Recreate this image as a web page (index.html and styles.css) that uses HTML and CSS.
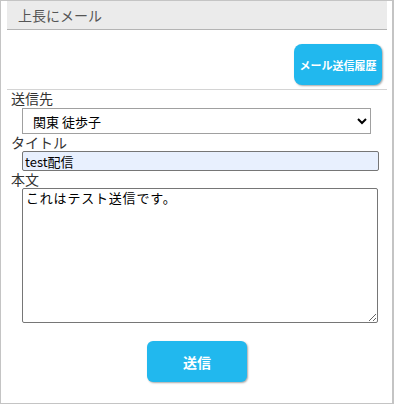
FILE: index.html
```html
<!DOCTYPE html>
<html>
<head>
	<meta charset="utf-8">
	<title>上長にメール</title>
	<link rel="stylesheet" href="styles.css">
</head>
<body>
	<div class="frame">
		<div class="pageHeader">上長にメール</div>
		<div class="topBar">
			<button type="button" class="btnHistory">メール送信履歴</button>
		</div>
		<form class="mailForm">
			<label class="fLabel">送信先</label>
			<select class="fSelect">
				<option>関東 徒歩子</option>
			</select>
			<label class="fLabel">タイトル</label>
			<input type="text" class="fInput" value="test配信">
			<label class="fLabel">本文</label>
			<textarea class="fText">これはテスト送信です。</textarea>
			<div class="fFooter">
				<button type="button" class="btnSend">送信</button>
			</div>
		</form>
	</div>
</body>
</html>
```

FILE: styles.css
```css
body{margin: 0;padding: 0}
.frame{
	box-sizing: border-box;
	width: 394px;
	height: 404px;
	border: 1px solid #c4c4c4;
	border-right-width: 2px;
	padding: 0 5px 0 6px;
	font-family: "Noto Sans CJK JP", sans-serif;
	color: #333;
	background-color: #fff;
}
.pageHeader{
	height: 28px;
	line-height: 28px;
	padding-left: 11px;
	background-color: #ebebeb;
	border-bottom: 1px solid #b4b4b4;
	font-size: 14px;
	color: #555;
}
.topBar{
	display: flex;
	justify-content: flex-end;
	padding: 14px 5px 4px 0;
	border-bottom: 1px solid #d4d4d4;
}
.btnHistory{
	width: 88px;
	height: 41px;
	padding: 0;
	border: 0;
	border-radius: 8px;
	background-color: #21b8ee;
	color: #fff;
	font-family: inherit;
	font-size: 11px;
	font-weight: bold;
	box-shadow: 1px 1px 2px rgba(0,0,0,0.35);
}
.mailForm{
	display: flex;
	flex-direction: column;
	align-items: flex-start;
}
.fLabel{
	display: block;
	padding-left: 4px;
	font-size: 14px;
	line-height: 17px;
	color: #333;
}
.fSelect{
	box-sizing: border-box;
	width: 349px;
	height: 26px;
	margin: 1px 0 0 15px;
	padding: 0 0 0 6px;
	border: 1px solid #a0a0a0;
	border-radius: 0;
	background-color: #fff;
	font-family: inherit;
	font-size: 13px;
	color: #000;
}
.fInput{
	box-sizing: border-box;
	width: 357px;
	height: 20px;
	margin: 0 0 0 15px;
	padding: 0 2px;
	border: 1px solid #767676;
	border-radius: 2px;
	background-color: #e8f0fe;
	font-family: inherit;
	font-size: 13px;
	color: #000;
	outline: 0;
}
.fText{
	box-sizing: border-box;
	width: 356px;
	height: 135px;
	margin: 0 0 0 15px;
	padding: 1px 3px;
	border: 1px solid #767676;
	border-radius: 2px;
	font-family: "Noto Sans CJK JP", monospace;
	font-size: 13px;
	letter-spacing: 0.8px;
	line-height: 16px;
	color: #000;
}
.fFooter{
	align-self: stretch;
	display: flex;
	justify-content: center;
	padding-top: 18px;
}
.btnSend{
	width: 100px;
	height: 41px;
	padding: 0;
	border: 0;
	border-radius: 6px;
	background-color: #21b8ee;
	color: #fff;
	font-family: inherit;
	font-size: 14px;
	font-weight: bold;
	box-shadow: 1px 1px 2px rgba(0,0,0,0.35);
}
```
